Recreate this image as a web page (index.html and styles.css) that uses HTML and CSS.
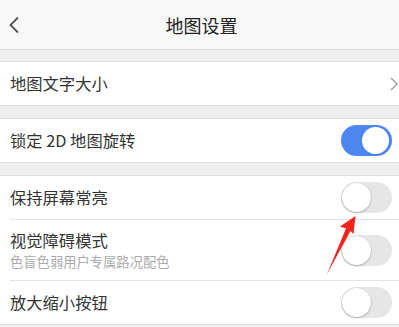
FILE: index.html
```html
<!DOCTYPE html>
<html lang="zh">
<head>
<meta charset="utf-8">
<title>地图设置</title>
<link rel="stylesheet" href="styles.css">
</head>
<body>
<div class="page">
  <header class="nav">
    <svg class="back" width="12" height="18" viewBox="0 0 12 18"><path d="M10 1.5 L2.5 9 L10 16.5" fill="none" stroke="#555" stroke-width="1.8"/></svg>
    <h1 class="title">地图设置</h1>
  </header>

  <section class="group first">
    <div class="row">
      <span class="label">地图文字大小</span>
      <svg class="chev" width="8" height="14" viewBox="0 0 8 14"><path d="M1 1 L7 7 L1 13" fill="none" stroke="#9a9a9a" stroke-width="1.4"/></svg>
    </div>
  </section>

  <section class="group">
    <div class="row">
      <span class="label">锁定 2D 地图旋转</span>
      <span class="switch on"><span class="knob"></span></span>
    </div>
  </section>

  <section class="group">
    <div class="row">
      <span class="label">保持屏幕常亮</span>
      <span class="switch"><span class="knob"></span></span>
    </div>
    <div class="row tall sep">
      <div class="texts">
        <span class="label">视觉障碍模式</span>
        <span class="sub">色盲色弱用户专属路况配色</span>
      </div>
      <span class="switch"><span class="knob"></span></span>
    </div>
    <div class="row sep">
      <span class="label">放大缩小按钮</span>
      <span class="switch"><span class="knob"></span></span>
    </div>
  </section>

  <svg class="arrow" width="399" height="327" viewBox="0 0 399 327">
    <polygon points="355.5,216 340,226.5 346,228.5 327,274 350.5,231 353.5,234" fill="#f2221c"/>
  </svg>
</div>
</body>
</html>
```

FILE: styles.css
```css
html, body {
  margin: 0;
  padding: 0;
  background: #efefef;
}
.page {
  position: relative;
  width: 399px;
  height: 327px;
  overflow: hidden;
  font-family: "Noto Sans CJK SC", "Noto Sans", sans-serif;
  color: #333;
}
.nav {
  height: 49px;
  background: #f8f8f8;
  border-bottom: 1px solid #d9d9d9;
  display: flex;
  align-items: center;
  justify-content: center;
  position: relative;
}
.back {
  position: absolute;
  left: 8px;
  top: 16px;
}
.title {
  margin: 0 0 0 4px;
  font-size: 18px;
  font-weight: normal;
  color: #222;
  line-height: 1;
}
.group {
  background: #fff;
  border-top: 1px solid #dedede;
  border-bottom: 1px solid #dedede;
  margin-top: 12px;
}
.group.first {
  margin-top: 11px;
}
.row {
  height: 43px;
  display: flex;
  align-items: center;
  justify-content: space-between;
  padding: 0 7px 0 10px;
  position: relative;
}
.row.tall {
  height: 60px;
}
.row.sep::before {
  content: "";
  position: absolute;
  left: 10px;
  right: 0;
  top: -1px;
  height: 1px;
  background: #e4e4e4;
}
.row.sep {
  margin-top: 1px;
}
.label {
  font-size: 16.3px;
  color: #333;
  line-height: 1;
}
.texts {
  display: flex;
  flex-direction: column;
  gap: 6px;
}
.sub {
  font-size: 13.3px;
  color: #ababab;
  line-height: 1;
}
.chev {
  margin-right: -6px;
}
.switch {
  width: 51px;
  height: 31px;
  border-radius: 16px;
  background: #e6e6e6;
  position: relative;
  flex: none;
}
.switch .knob {
  position: absolute;
  left: 1px;
  top: 1px;
  width: 29px;
  height: 29px;
  border-radius: 50%;
  background: #fff;
  box-shadow: 0 1px 2px rgba(0,0,0,0.25), 0 0 0 0.5px rgba(0,0,0,0.08);
}
.switch.on {
  background: #4e86ef;
}
.switch.on .knob {
  left: 21px;
  top: 2px;
  width: 27px;
  height: 27px;
  box-shadow: 0 0 0 1px #4e86ef;
}
.arrow {
  position: absolute;
  left: 0;
  top: 0;
  pointer-events: none;
}
```
